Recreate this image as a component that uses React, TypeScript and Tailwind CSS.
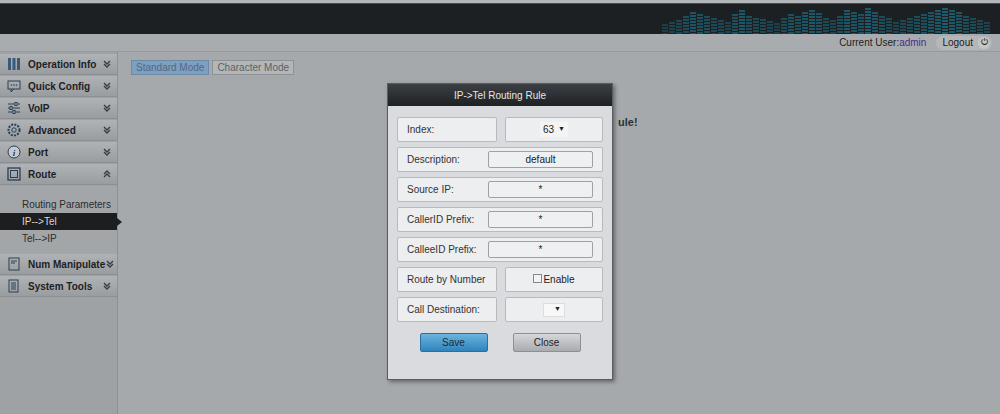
import React from "react";

const FONT = { fontFamily: '"Liberation Sans", Arial, sans-serif' };

const bars = [4,6,8,12,16,14,12,10,8,6,14,18,12,10,9,7,5,10,14,12,16,18,15,10,8,12,18,16,14,20,16,12,10,6,8,10,12,14,16,18,20,18,16,12,10,8,6];

function Chevron({ up }: { up?: boolean }) {
  return (
    <svg width="10" height="10" viewBox="0 0 10 10" className="text-[#3a3d40] shrink-0">
      <path d={up ? "M2 5 L5 2 L8 5 M2 8 L5 5 L8 8" : "M2 2 L5 5 L8 2 M2 5 L5 8 L8 5"} stroke="currentColor" strokeWidth="1.4" fill="none" />
    </svg>
  );
}

function MenuItem({ icon, label, up }: { icon: React.ReactNode; label: string; up?: boolean }) {
  return (
    <div className="h-[21px] mb-[1px] flex items-center pl-[7px] pr-[5px] bg-gradient-to-b from-[#b0b3b6] to-[#9a9da0] border-b border-[#8c8f92]">
      <div className="w-[14px] h-[14px] flex items-center justify-center shrink-0">{icon}</div>
      <span className="ml-[7px] flex-1 whitespace-nowrap text-[10px] font-bold text-[#1e2124]">{label}</span>
      <Chevron up={up} />
    </div>
  );
}

const sq = <svg width="14" height="14" viewBox="0 0 14 14"><rect x="1" y="1" width="12" height="12" fill="none" stroke="#2a3f55" strokeWidth="1.3" /><rect x="3.5" y="3.5" width="7" height="7" fill="none" stroke="#2a3f55" /></svg>;

function Row({ label, children, split }: { label: string; children: React.ReactNode; split?: boolean }) {
  if (split)
    return (
      <div className="flex gap-[8px] h-[25px]">
        <div className="w-[100px] bg-[#eceef0] border border-[#b8bbbe] rounded-[2px] flex items-center pl-[9px] text-[10px] text-[#333]">{label}</div>
        <div className="flex-1 bg-[#eceef0] border border-[#b8bbbe] rounded-[2px] flex items-center justify-center text-[10px] text-[#222]">{children}</div>
      </div>
    );
  return (
    <div className="h-[25px] bg-[#eceef0] border border-[#b8bbbe] rounded-[2px] flex items-center pl-[9px] pr-[9px] text-[10px] text-[#333]">
      <span className="flex-1">{label}</span>
      <div className="w-[105px] h-[17px] bg-[#eef0f2] border border-[#9fa2a5] rounded-[2px] flex items-center justify-center text-[10px] text-[#222]">{children}</div>
    </div>
  );
}

export default function App() {
  return (
    <div style={FONT} className="w-[1000px] h-[414px] bg-[#a6a9ac] flex flex-col overflow-hidden relative">
      <div className="h-[3px] bg-[#b4b7ba]" />
      <div className="h-[31px] bg-[#1d2023] border-t border-[#4b4e51] flex justify-end items-end overflow-hidden pr-[10px]">
        <div className="flex items-end gap-[1px] h-[31px]">
          {bars.map((b, i) => (
            <div key={i} className="w-[6px] bg-[repeating-linear-gradient(to_bottom,#1a6579_0px,#1a6579_2px,#1d2023_2px,#1d2023_3px)]" style={{ height: b + 6, opacity: 0.35 + b / 40 }} />
          ))}
        </div>
      </div>
      <div className="h-[18px] bg-[#a9acaf] border-b border-[#97999c] flex items-center justify-end pr-[8px] text-[10px] text-[#222]">
        <span>Current User:<span className="text-[#4a2d8c]">admin</span></span>
        <div className="ml-[10px] h-[14px] bg-[#b4b6b9] rounded-full flex items-center pl-[6px] pr-[2px] gap-[5px]">
          <span>Logout</span>
          <span className="w-[12px] h-[12px] rounded-full bg-[#c4c6c8] text-[9px] flex items-center justify-center">⏻</span>
        </div>
      </div>
      <div className="flex flex-1">
        <div className="w-[118px] bg-[#9fa2a5] pt-[2px] border-r border-[#8e9194]">
          <MenuItem label="Operation Info" icon={<svg width="14" height="14" viewBox="0 0 14 14"><rect x="1" y="1" width="3" height="12" fill="#3a5a7c" /><rect x="5.5" y="1" width="3" height="12" fill="#3a5a7c" /><rect x="10" y="1" width="3" height="12" fill="#3a5a7c" /></svg>} />
          <MenuItem label="Quick Config" icon={<svg width="14" height="14" viewBox="0 0 14 14"><rect x="1" y="2" width="12" height="8" fill="none" stroke="#2a3f55" /><path d="M4 10 L4 13 L7 10" fill="none" stroke="#2a3f55" /><circle cx="4.5" cy="6" r="0.8" fill="#2a3f55" /><circle cx="7" cy="6" r="0.8" fill="#2a3f55" /><circle cx="9.5" cy="6" r="0.8" fill="#2a3f55" /></svg>} />
          <MenuItem label="VoIP" icon={<svg width="14" height="14" viewBox="0 0 14 14" stroke="#2a3f55"><path d="M1 3H13M1 7H13M1 11H13" /><rect x="8" y="1.5" width="2" height="3" fill="#ccc" /><rect x="3" y="5.5" width="2" height="3" fill="#ccc" /><rect x="6" y="9.5" width="2" height="3" fill="#ccc" /></svg>} />
          <MenuItem label="Advanced" icon={<svg width="14" height="14" viewBox="0 0 14 14"><circle cx="7" cy="7" r="5.5" fill="none" stroke="#2a3f55" strokeDasharray="2 1.2" strokeWidth="2" /><circle cx="7" cy="7" r="2.2" fill="none" stroke="#2a3f55" /></svg>} />
          <MenuItem label="Port" icon={<svg width="14" height="14" viewBox="0 0 14 14"><circle cx="7" cy="7" r="6" fill="#c8cacc" stroke="#2a3f55" /><text x="7" y="10.5" fontSize="9" fontStyle="italic" fontWeight="bold" textAnchor="middle" fill="#1f3b66" fontFamily="Liberation Serif">i</text></svg>} />
          <MenuItem label="Route" up icon={sq} />
          <div className="h-[68px] bg-[#a3a6a9] pt-[10px] text-[10px] text-[#2a2c2e]">
            <div className="h-[17px] pl-[22px] flex items-center">Routing Parameters</div>
            <div className="h-[17px] pl-[22px] flex items-center bg-[#1c1e20] text-[#d8d8d8] relative">
              IP--&gt;Tel
              <span className="absolute right-[-5px] top-[5px] w-0 h-0 border-y-[4px] border-y-transparent border-l-[5px] border-l-[#1c1e20]" />
            </div>
            <div className="h-[17px] pl-[22px] flex items-center">Tel--&gt;IP</div>
          </div>
          <MenuItem label="Num Manipulate" icon={<svg width="14" height="14" viewBox="0 0 14 14"><rect x="2" y="1" width="10" height="12" fill="none" stroke="#2a3f55" /><path d="M4 4H10M4 6H8" stroke="#2a3f55" /></svg>} />
          <MenuItem label="System Tools" icon={<svg width="14" height="14" viewBox="0 0 14 14"><rect x="2" y="1" width="9" height="12" fill="none" stroke="#2a3f55" /><path d="M4 4H9M4 6H9M4 8H9M4 10H9" stroke="#2a3f55" /></svg>} />
        </div>
        <div className="flex-1 pl-[13px] pt-[8px] relative">
          <div className="flex gap-[3px] text-[10px]">
            <div className="h-[15px] px-[4px] bg-[#7f9fbf] border border-[#6b89a8] text-[#4e6a85] flex items-center">Standard Mode</div>
            <div className="h-[15px] px-[4px] bg-[#b3b6b9] border border-[#8f9295] text-[#5e6164] flex items-center">Character Mode</div>
          </div>
          <div className="absolute left-[500px] top-[62px] text-[11px] font-bold text-[#2e3134]">ule!</div>
        </div>
      </div>

      <div className="absolute left-[387px] top-[83px] w-[226px] h-[297px] bg-[#d9dbde] border border-[#5a5d60] shadow-[2px_2px_4px_rgba(0,0,0,0.4)] flex flex-col">
        <div className="h-[22px] bg-gradient-to-b from-[#3c4044] to-[#1e2124] text-[#e6e6e6] text-[10px] flex items-center justify-center">IP-&gt;Tel Routing Rule</div>
        <div className="px-[9px] pt-[11px] flex flex-col gap-[5px]">
          <Row split label="Index:">
            <div className="w-[28px] h-[15px] bg-[#f4f4f4] flex items-center justify-center gap-[4px] text-[10px]">63 <span className="text-[7px]">▼</span></div>
          </Row>
          <Row label="Description:">default</Row>
          <Row label="Source IP:">*</Row>
          <Row label="CallerID Prefix:">*</Row>
          <Row label="CalleeID Prefix:">*</Row>
          <Row split label="Route by Number">
            <span className="w-[9px] h-[9px] border border-[#888] bg-[#f2f2f2] mr-[1px] -mt-[3px]" />Enable
          </Row>
          <Row split label="Call Destination:">
            <div className="w-[22px] h-[14px] bg-[#f8f8f8] border border-[#ddd] flex items-center justify-end pr-[3px] text-[7px]">▼</div>
          </Row>
        </div>
        <div className="flex justify-center gap-[25px] mt-[11px]">
          <div className="w-[68px] h-[19px] rounded-[2px] bg-gradient-to-b from-[#6ab5e0] to-[#2f83bb] border border-[#2d6f9c] text-[10px] text-[#1a2a3a] flex items-center justify-center">Save</div>
          <div className="w-[68px] h-[19px] rounded-[2px] bg-gradient-to-b from-[#d5d7da] to-[#a9acaf] border border-[#8d9093] text-[10px] text-[#222] flex items-center justify-center">Close</div>
        </div>
      </div>
    </div>
  );
}
